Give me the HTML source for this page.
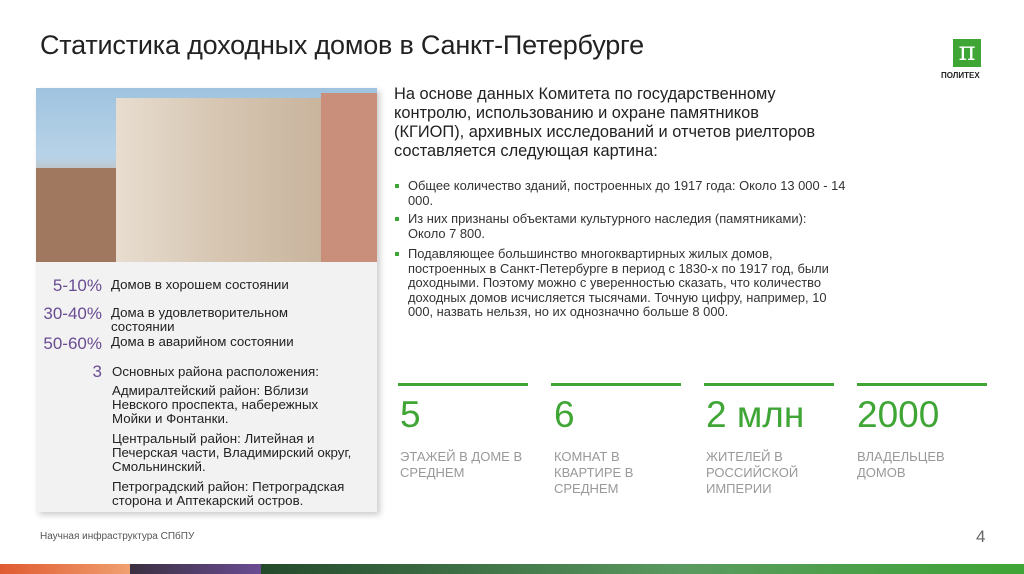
<!DOCTYPE html><html><head><meta charset="utf-8"><style>
body{margin:0;width:1024px;height:574px;background:#fff;position:relative;overflow:hidden;font-family:"Liberation Sans",sans-serif;color:#222}
.a{position:absolute}
h1{position:absolute;left:40px;top:30px;margin:0;font-weight:normal;font-size:27px;color:#222;letter-spacing:-0.2px}
.panel{left:36px;top:88px;width:341px;height:424px;background:#f2f2f2;box-shadow:3px 3px 6px rgba(0,0,0,.2)}
.photo{left:36px;top:88px;width:341px;height:174px;background:linear-gradient(180deg,#9fc3df 0%,#b8d3e8 40%,#c9a98a 60%,#8b6e5a 100%)}
.p{color:#6a4c93;font-size:17px;text-align:right;width:66px}
.t{font-size:13.3px;color:#222;line-height:14px}
.ul li{list-style:none;position:absolute;white-space:nowrap;left:13px}
.ul li:before{content:"";position:absolute;left:-13px;top:5px;width:4px;height:4px;background:#3fa535}
.num{font-size:37px;color:#3fa535}
.lbl{font-size:13px;color:#999;line-height:16px}
.ln{height:3px;background:#3fa535;top:383px;width:130px}
</style></head><body>
<h1>Статистика доходных домов в Санкт-Петербурге</h1>
<div class="a" style="left:953px;top:39px;width:28px;height:28px;background:#3fa535;color:#fff;font-size:26px;text-align:center;line-height:26px;font-family:'DejaVu Serif',serif">π</div>
<div class="a" style="left:941px;top:71px;font-size:8px;font-weight:bold;color:#222">ПОЛИТЕХ</div>
<div class="a panel"></div>
<div class="a photo">
<div class="a" style="left:80px;top:10px;width:205px;height:164px;background:linear-gradient(90deg,#e8ddd0,#d6c6b2 50%,#c9b49d)"></div>
<div class="a" style="left:285px;top:5px;width:56px;height:169px;background:#c98f7a"></div>
<div class="a" style="left:0;top:80px;width:80px;height:94px;background:#a07860"></div>
</div>
<div class="a p" style="left:36px;top:276px">5-10%</div><div class="a t" style="left:111px;top:278px">Домов в хорошем состоянии</div>
<div class="a p" style="left:30px;top:304px;width:72px">30-40%</div><div class="a t" style="left:111px;top:306px">Дома в удовлетворительном<br>состоянии</div>
<div class="a p" style="left:30px;top:334px;width:72px">50-60%</div><div class="a t" style="left:111px;top:335px">Дома в аварийном состоянии</div>
<div class="a p" style="left:36px;top:362px">3</div>
<div class="a t" style="left:112px;top:365px">Основных района расположения:</div>
<div class="a t" style="left:112px;top:384px">Адмиралтейский район: Вблизи<br>Невского проспекта, набережных<br>Мойки и Фонтанки.</div>
<div class="a t" style="left:112px;top:432px">Центральный район: Литейная и<br>Печерская части, Владимирский округ,<br>Смольнинский.</div>
<div class="a t" style="left:112px;top:480px">Петроградский район: Петроградская<br>сторона и Аптекарский остров.</div>
<div class="a" style="left:394px;top:85px;font-size:16.4px;line-height:19px;white-space:nowrap">На основе данных Комитета по государственному<br>контролю, использованию и охране памятников<br>(КГИОП), архивных исследований и отчетов риелторов<br>составляется следующая картина:</div>
<ul class="a ul" style="left:395px;top:179px;margin:0;padding:0;font-size:12.9px;line-height:14.5px;color:#333">
<li style="top:0">Общее количество зданий, построенных до 1917 года: Около 13 000 - 14<br>000.</li>
<li style="top:33px">Из них признаны объектами культурного наследия (памятниками):<br>Около 7 800.</li>
<li style="top:68px">Подавляющее большинство многоквартирных жилых домов,<br>построенных в Санкт-Петербурге в период с 1830-х по 1917 год, были<br>доходными. Поэтому можно с уверенностью сказать, что количество<br>доходных домов исчисляется тысячами. Точную цифру, например, 10<br>000, назвать нельзя, но их однозначно больше 8 000.</li></ul>
<div class="a ln" style="left:398px"></div><div class="a ln" style="left:551px"></div><div class="a ln" style="left:704px"></div><div class="a ln" style="left:857px"></div>
<div class="a num" style="left:400px;top:394px">5</div><div class="a num" style="left:554px;top:394px">6</div><div class="a num" style="left:706px;top:394px">2 млн</div><div class="a num" style="left:857px;top:394px">2000</div>
<div class="a lbl" style="left:400px;top:449px">ЭТАЖЕЙ В ДОМЕ В<br>СРЕДНЕМ</div>
<div class="a lbl" style="left:554px;top:449px">КОМНАТ В<br>КВАРТИРЕ В<br>СРЕДНЕМ</div>
<div class="a lbl" style="left:706px;top:449px">ЖИТЕЛЕЙ В<br>РОССИЙСКОЙ<br>ИМПЕРИИ</div>
<div class="a lbl" style="left:857px;top:449px">ВЛАДЕЛЬЦЕВ<br>ДОМОВ</div>
<div class="a" style="left:40px;top:531px;font-size:10px;color:#555">Научная инфраструктура СПбПУ</div>
<div class="a" style="left:976px;top:527px;font-size:17px;color:#666">4</div>
<div class="a" style="left:0;top:564px;width:130px;height:10px;background:linear-gradient(90deg,#e05a30,#f0a070)"></div>
<div class="a" style="left:130px;top:564px;width:131px;height:10px;background:linear-gradient(90deg,#3a3040,#6a4c93)"></div>
<div class="a" style="left:261px;top:564px;width:763px;height:10px;background:linear-gradient(90deg,#244a2c,#5a9a60 55%,#3fa535)"></div>
</body></html>
